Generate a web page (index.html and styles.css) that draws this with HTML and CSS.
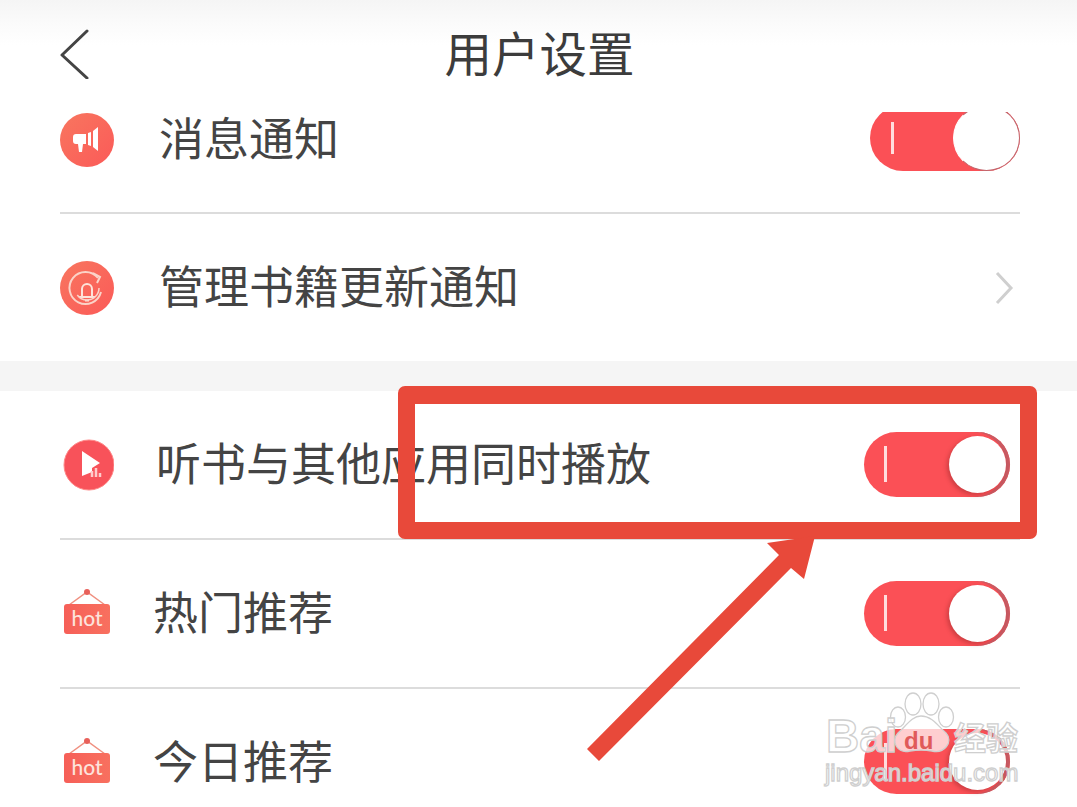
FILE: index.html
```html
<!DOCTYPE html>
<html lang="zh-CN">
<head>
<meta charset="utf-8">
<title>用户设置</title>
<link rel="stylesheet" href="styles.css">
</head>
<body>
<div class="page">
  <header class="topbar">
    <svg class="back" viewBox="0 0 32 50" width="32" height="50"><path d="M28 2 L3 26 L28 49" fill="none" stroke="#444" stroke-width="3" stroke-linecap="round" stroke-linejoin="round"/></svg>
    <h1 class="title">用户设置</h1>
  </header>
  <section class="group">
    <div class="row row-first">
      <svg class="icon" viewBox="0 0 54 54" width="54" height="54"><defs><linearGradient id="g1" x1="0" y1="0" x2="1" y2="1"><stop offset="0" stop-color="#f8765f"/><stop offset="1" stop-color="#fb5a58"/></linearGradient><linearGradient id="g2" x1="0" y1="0" x2="1" y2="0"><stop offset="0" stop-color="#f65f58"/><stop offset="1" stop-color="#f8705f"/></linearGradient></defs><circle cx="27" cy="27" r="27" fill="url(#g1)"/><path d="M16 21h10v10h-3l-1 8h-3l-1-8h-2a3 3 0 0 1-3-3v-4a3 3 0 0 1 3-3z M28 20l3-1v14l-3-1z M33 18l5-4v24l-5-4z" fill="#fff"/></svg>
      <span class="label label-a">消息通知</span>
      <span class="toggle toggle-large"><i class="tick"></i><i class="knob"></i></span>
    </div>
    <div class="row row-second">
      <svg class="icon" viewBox="0 0 54 54" width="54" height="54"><circle cx="27" cy="27" r="27" fill="url(#g1)"/><path d="M38 17a16 16 0 1 0 3 14" fill="none" stroke="#fbd3c8" stroke-width="2"/><path d="M33 12l7 4-3 6" fill="none" stroke="#fbd3c8" stroke-width="2"/><path d="M19 36h16M22 36v-8a5 5 0 0 1 10 0v8M25 39.500h4" fill="none" stroke="#fde3da" stroke-width="2"/><circle cx="27" cy="27" r="12" fill="none" stroke="#fbd3c8" stroke-width="1.500" stroke-dasharray="30 46"/></svg>
      <span class="label label-a">管理书籍更新通知</span>
      <svg class="chevron" viewBox="0 0 20 34" width="20" height="34"><path d="M3 2 L17 17 L3 32" fill="none" stroke="#cfcfcf" stroke-width="3"/></svg>
    </div>
  </section>
  <div class="spacer"></div>
  <section class="group">
    <div class="row">
      <svg class="icon" viewBox="0 0 54 54" width="54" height="54"><circle cx="29" cy="27" r="25" fill="#f8525a" stroke="#f88" stroke-width="1"/><path d="M22 13 L40 25 L32 30 V34 L22 38z" fill="#fff"/><path d="M32 39v-6M36 39v-9M40 39v-4" stroke="#fcc" stroke-width="2.500"/></svg>
      <span class="label label-b">听书与其他应用同时播放</span>
      <span class="toggle"><i class="tick"></i><i class="knob"></i></span>
    </div>
    <div class="row">
      <svg class="icon" viewBox="0 0 54 54" width="54" height="54"><path d="M9 18 L27 5 L45 18" fill="none" stroke="#f09080" stroke-width="1.500"/><circle cx="27" cy="5" r="3" fill="#e8605a"/><rect x="4" y="17" width="46" height="30" rx="3" fill="url(#g2)"/><text class="hot" x="27" y="39" text-anchor="middle">hot</text></svg>
      <span class="label label-c">热门推荐</span>
      <span class="toggle"><i class="tick"></i><i class="knob"></i></span>
    </div>
    <div class="row row-last">
      <svg class="icon" viewBox="0 0 54 54" width="54" height="54"><path d="M9 18 L27 5 L45 18" fill="none" stroke="#f09080" stroke-width="1.500"/><circle cx="27" cy="5" r="3" fill="#e8605a"/><rect x="4" y="17" width="46" height="30" rx="3" fill="url(#g2)"/><text class="hot" x="27" y="39" text-anchor="middle">hot</text></svg>
      <span class="label label-c">今日推荐</span>
      <span class="toggle"><i class="tick"></i><i class="knob"></i></span>
    </div>
  </section>
  <svg class="overlay" viewBox="0 0 1077 807" width="1077" height="807">
    <path fill-rule="evenodd" d="M405 386 H1030 a7 7 0 0 1 7 7 V532 a7 7 0 0 1 -7 7 H405 a7 7 0 0 1 -7 -7 V393 a7 7 0 0 1 7 -7 Z M415 404 V522 H1020 V404 Z" fill="#e8493a"/>
    <path d="M587 749 L779 555 L767 543 L815 536 L804 579 L791 568 L599 761 Z" fill="#e8493a"/>
    <g fill="#fff" fill-opacity=".72" stroke="#cfcfcf" stroke-width="1.300">
      <ellipse cx="913" cy="704" rx="8" ry="11"/>
      <ellipse cx="931" cy="704" rx="8" ry="11"/>
      <ellipse cx="898" cy="717" rx="7.500" ry="10"/>
      <ellipse cx="946" cy="717" rx="7.500" ry="10"/>
      <path d="M921 716 C932 716 938 726 946 733 C954 742 944 754 932 751 C925 750 917 750 910 751 C898 754 890 742 898 733 C906 726 912 716 921 716 Z"/>
      <text class="wm-big" x="826" y="752">Bai</text>
      <text class="wm-cjk" x="954" y="750">经验</text>
      <text class="wm-small" x="825" y="781">jingyan.baidu.com</text>
    </g>
    <text class="wm-du" x="904" y="749">du</text>
  </svg>
</div>
</body>
</html>
```
FILE: styles.css
```css
* { box-sizing: border-box; }
html, body { margin: 0; padding: 0; background: #fff; }
.page {
  position: relative;
  width: 1077px;
  height: 807px;
  overflow: hidden;
  background: #fff;
  font-family: "Noto Sans CJK SC", "Noto Sans", sans-serif;
  color: #444;
}
.topbar {
  position: relative;
  z-index: 1;
  display: flex;
  align-items: center;
  justify-content: center;
  height: 112px;
  padding: 0 0 8px 2px;
  background: linear-gradient(#f5f5f5 0, #fbfbfb 25px, #fff 45px);
}
.back { position: absolute; left: 59px; top: 29px; }
.title { margin: 0; font-size: 47.500px; font-weight: 400; line-height: 1; color: #3c3c3c; }
.group { padding: 0 57px 0 60px; }
.row {
  display: flex;
  align-items: center;
  height: 149px;
  border-bottom: 2px solid #dcdcdc;
}
.row-first { height: 102px; padding-bottom: 44px; }
.row-second { height: 147px; border-bottom: 0; }
.row-last { border-bottom: 0; height: 118px; padding-top: 30px; }
.icon { flex: none; display: block; }
.label { flex: 1; font-size: 45px; line-height: 48px; padding-bottom: 6px; white-space: nowrap; }
.label-a { margin-left: 45px; }
.label-b { margin-left: 42px; }
.label-c { margin-left: 39px; }
.chevron { flex: none; margin-right: 6px; }
.spacer { height: 30px; background: #f5f5f5; }
.toggle {
  position: relative;
  flex: none;
  display: block;
  width: 146px;
  height: 65px;
  margin-right: 10px;
  border-radius: 33px;
  background: #fb5056;
  box-shadow: inset -4px 0 0 #c95a62;
}
.row-last .toggle { margin-top: -4px; }
.tick { position: absolute; left: 20px; top: 14px; width: 3px; height: 36px; background: #fdd; }
.knob {
  position: absolute;
  right: 4px;
  top: 4px;
  width: 57px;
  height: 57px;
  border-radius: 50%;
  background: #fff;
  box-shadow: -2px 2px 4px rgba(120, 30, 30, .35);
}
.toggle-large {
  width: 150px;
  height: 66px;
  margin-right: 0;
  box-shadow: none;
  margin-top: -5px;
}
.toggle-large .tick { left: 21px; top: 17px; height: 32px; }
.toggle-large .knob {
  right: 0;
  top: 0;
  width: 67px;
  height: 66px;
  border: 1px solid #c0656c;
  border-left-color: #fff;
  box-shadow: none;
}
.hot { font-family: "Lato", sans-serif; font-size: 21px; font-weight: 500; fill: #fde3dc; }
.overlay { position: absolute; z-index: 2; left: 0; top: 0; pointer-events: none; }
.wm-big { font-family: "Liberation Sans", sans-serif; font-size: 46px; font-weight: 700; }
.wm-cjk { font-family: "Noto Sans CJK SC", sans-serif; font-size: 32px; font-weight: 700; }
.wm-small { font-family: "Liberation Sans", sans-serif; font-size: 24px; }
.wm-du { font-family: "Liberation Sans", sans-serif; font-size: 24px; font-weight: 700; fill: #e05a5a; }
```
